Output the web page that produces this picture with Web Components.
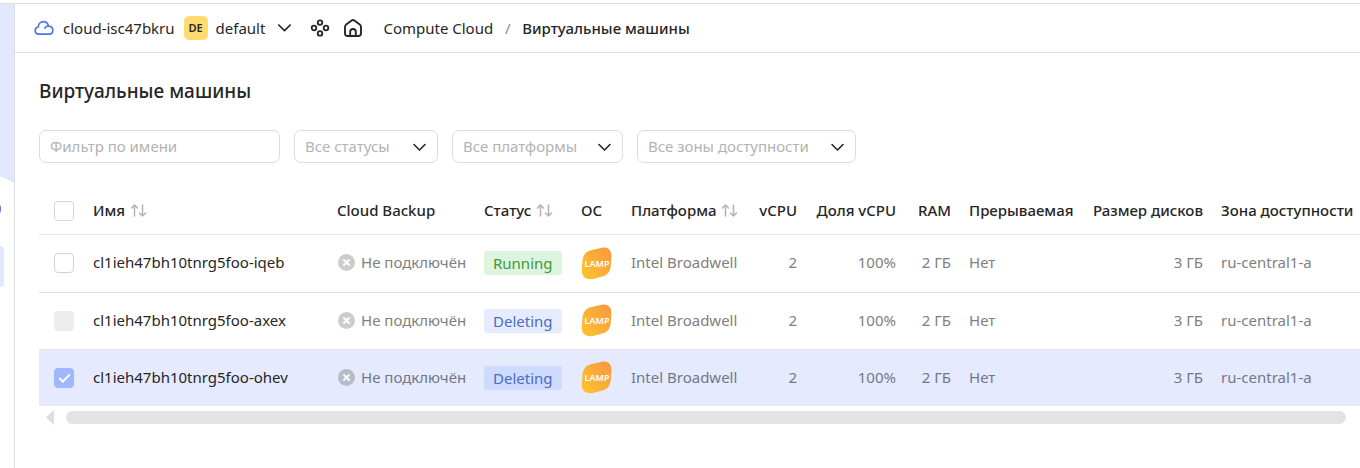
<!DOCTYPE html>
<html lang="ru">
<head>
<meta charset="utf-8">
<meta name="viewport" content="width=device-width, initial-scale=1">
<title>Виртуальные машины</title>
<style>
  body {
    margin: 0;
    background: #fff;
    color: #262626;
    font: 15px/20px "Noto Sans", "Open Sans", sans-serif;
    --line: #e3e3e3;
    --accent: #e5eaff;
    --hint: #b3b3b3;
    --muted: #808080;
  }
</style>
</head>
<body>
<console-app>
  <side-rail slot="rail"></side-rail>
  <top-bar slot="header" cloud="cloud-isc47bkru" folder="default" initials="DE">
    <a href="#compute">Compute Cloud</a>
    <span slot="current">Виртуальные машины</span>
  </top-bar>
  <h1 slot="title">Виртуальные машины</h1>
  <filter-bar slot="filters">
    <text-filter label="Фильтр по имени"></text-filter>
    <select-filter label="Все статусы" style="--width:144px"></select-filter>
    <select-filter label="Все платформы" style="--width:171px"></select-filter>
    <select-filter label="Все зоны доступности" style="--width:219px"></select-filter>
  </filter-bar>
  <vm-table></vm-table>
  <scroll-track></scroll-track>
</console-app>

<script>
  const define = (name, html, setup) => {
    const template = document.createElement('template');
    template.innerHTML = html;
    customElements.define(name, class extends HTMLElement {
      constructor() {
        super();
        this.attachShadow({ mode: 'open' }).append(template.content.cloneNode(true));
      }
      connectedCallback() {
        if (setup) setup(this, this.shadowRoot);
      }
    });
  };

  define('console-app', `
    <style>
      :host { display: block; border-top: 1px solid #dedede; margin-top: 3px; }
      .shell { display: grid; grid-template-columns: 15px minmax(0, 1fr); min-height: calc(100vh - 4px); }
      .content { padding-left: 24px; }
      ::slotted(h1) { margin: 24px 0 25px; font-size: 19px; line-height: 28px; font-weight: 500; }
    </style>
    <div class="shell">
      <slot name="rail"></slot>
      <main>
        <slot name="header"></slot>
        <div class="content">
          <slot name="title"></slot>
          <slot name="filters"></slot>
          <slot></slot>
        </div>
      </main>
    </div>`);

  define('side-rail', `
    <style>
      :host { display: block; box-sizing: border-box; border-right: 1px solid #dcdde3; overflow: hidden; }
      svg { display: block; }
    </style>
    <svg width="14" height="300" viewBox="0 0 14 300" aria-hidden="true">
      <path d="M0 0H14V179Q8 175 0 172.500Z" fill="#e1e8ff"/>
      <circle cx="-9" cy="205" r="10" fill="#4a74dd"/>
      <path d="M0 242a4 4 0 0 1 4 4v33a4 4 0 0 1-4 4Z" fill="#e1e8ff"/>
    </svg>`);

  define('top-bar', `
    <style>
      :host { display: block; }
      header { display: flex; align-items: center; height: 48px; border-bottom: 1px solid var(--line); padding: 0 19px; white-space: nowrap; }
      a, ::slotted(a) { color: inherit; text-decoration: none; }
      svg { display: block; flex: none; }
      .cloud { display: flex; align-items: center; gap: 9px; margin-right: 9px; }
      button { display: flex; align-items: center; border: 0; padding: 0; background: none; color: inherit; font: inherit; }
      .initials { width: 24px; border-radius: 5px; margin-right: 8px; background: #ffdb70; color: #262626; font-size: 11px; line-height: 24px; font-weight: 600; text-align: center; }
      .folder svg { margin-left: 12px; }
      .tools { display: flex; gap: 13px; margin: 0 20px 0 18px; }
      nav { display: flex; }
      .slash { width: 29px; text-align: center; color: #8c8c8c; }
      .current { font-weight: 500; }
    </style>
    <header>
      <a class="cloud" href="#cloud">
        <svg width="20" height="16" viewBox="0 0 20 16" fill="none" stroke="#4a78e0" stroke-width="1.700" stroke-linecap="round" stroke-linejoin="round"><path d="M4.600 14.200h10.700a3.800 3.800 0 0 0 3.500-3.800c0-2.200-1.700-4-4.200-4.200C13.900 3.400 11.700 1.700 9.300 1.700 6.400 1.700 4.200 4 4.200 7 2.200 7.200 1.200 8.900 1.200 10.600c0 2 1.400 3.600 3.400 3.600ZM10.800 8.200c.5-1.300 2-2.100 3.800-2"/></svg>
        <span id="cloud"></span>
      </a>
      <button class="folder" type="button">
        <span class="initials"></span><span id="folder"></span>
        <svg width="15" height="10" viewBox="0 0 15 10" fill="none" stroke="#262626" stroke-width="1.700" stroke-linecap="round" stroke-linejoin="round"><path d="M1.800 2 7.500 7.700 13.200 2"/></svg>
      </button>
      <div class="tools">
        <button type="button" aria-label="Сервисы">
          <svg width="20" height="20" viewBox="0 0 20 20" fill="none" stroke="#262626" stroke-width="1.800"><circle cx="10" cy="4.600" r="2.300"/><circle cx="10" cy="15.400" r="2.300"/><circle cx="4" cy="10" r="2.300"/><circle cx="16" cy="10" r="2.300"/></svg>
        </button>
        <button type="button" aria-label="Главная">
          <svg width="20" height="20" viewBox="0 0 20 20" fill="none" stroke="#262626" stroke-width="1.900" stroke-linejoin="round"><path d="M2 8.900a3 3 0 0 1 1.200-2.400L8.300 2.700a2.800 2.800 0 0 1 3.400 0l5.100 3.800A3 3 0 0 1 18 8.900v6.300a2.800 2.800 0 0 1-2.800 2.800H4.800A2.800 2.800 0 0 1 2 15.200ZM7.200 18v-4.200a2.800 2.800 0 0 1 5.600 0V18"/></svg>
        </button>
      </div>
      <nav aria-label="Навигация"><slot></slot><span class="slash">/</span><span class="current"><slot name="current"></slot></span></nav>
    </header>`,
    (host, root) => {
      root.querySelector('#cloud').textContent = host.getAttribute('cloud');
      root.querySelector('#folder').textContent = host.getAttribute('folder');
      root.querySelector('.initials').textContent = host.getAttribute('initials');
    });

  define('filter-bar', `
    <style>:host { display: flex; flex-wrap: wrap; gap: 14px; }</style>
    <slot></slot>`);

  define('text-filter', `
    <style>
      :host { display: block; width: 241px; }
      input { display: block; box-sizing: border-box; width: 100%; height: 33px; margin: 0; border: 1px solid #dcdcdc; border-radius: 7px; padding: 0 10px 2px; background: #fff; color: inherit; font: inherit; }
      input::placeholder { color: var(--hint); opacity: 1; }
    </style>
    <input type="text">`,
    (host, root) => {
      const input = root.querySelector('input');
      input.placeholder = host.getAttribute('label');
      input.setAttribute('aria-label', input.placeholder);
    });

  define('select-filter', `
    <style>
      :host { display: grid; align-items: center; width: var(--width); }
      select, svg { grid-area: 1 / 1; }
      select { appearance: none; box-sizing: border-box; width: 100%; height: 33px; margin: 0; border: 1px solid #dcdcdc; border-radius: 7px; padding: 0 32px 2px 10px; background: #fff; color: var(--hint); font: inherit; }
      svg { justify-self: end; margin-right: 11px; pointer-events: none; }
    </style>
    <select><option></option></select>
    <svg width="15" height="10" viewBox="0 0 15 10" fill="none" stroke="#262626" stroke-width="1.600" stroke-linecap="round" stroke-linejoin="round"><path d="M2 2.500 7.500 8 13 2.500"/></svg>`,
    (host, root) => {
      root.querySelector('option').textContent = host.getAttribute('label');
      root.querySelector('select').setAttribute('aria-label', host.getAttribute('label'));
    });

  define('status-label', `
    <style>
      :host { display: inline-block; vertical-align: middle; border-radius: 3px; padding: 2px 9px; background: rgba(82, 130, 255, .15); color: #4a6cc3; }
      :host([kind="running"]) { background: #ddf5df; color: #3a9a3a; }
    </style>
    <slot></slot>`);

  define('backup-state', `
    <style>
      :host { display: flex; align-items: center; gap: 6px; }
      svg { flex: none; }
    </style>
    <svg width="18" height="18" viewBox="0 0 18 18" aria-hidden="true"><circle cx="9.500" cy="9.500" r="8.500" fill="#000" fill-opacity=".2"/><path d="m7 7 5 5m0-5-5 5" stroke="#fff" stroke-width="1.900" stroke-linecap="round"/></svg>
    <slot></slot>`);

  define('os-badge', `
    <style>
      :host { display: block; width: 31px; }
      svg { display: block; }
      text { font: 600 9px "Noto Sans", sans-serif; }
    </style>
    <svg width="31" height="33" viewBox="0 0 31 33" role="img" aria-label="LAMP">
      <defs><linearGradient id="g" x1="0" y1="1" x2="1" y2="0"><stop offset="0" stop-color="#ffc52e"/><stop offset="1" stop-color="#f7973f"/></linearGradient></defs>
      <path d="M11 3 20 .9C27-.6 30.800 3.500 30.400 10L29.800 18C29.300 25 26.500 28.300 20.500 29.800L12 31.900C4.800 33.500.3 29.500.7 23L1.400 14.500C2 7.500 5 4.300 11 3Z" fill="url(#g)"/>
      <text x="16" y="20" text-anchor="middle" fill="#fff">LAMP</text>
    </svg>`);

  define('sort-icon', `
    <style>:host { display: inline-block; } svg { display: block; }</style>
    <svg width="17" height="14" viewBox="0 0 17 14" fill="none" stroke="#b3b3b3" stroke-width="1.500" stroke-linecap="round" stroke-linejoin="round" aria-hidden="true"><path d="M4.500 13V2M1.500 5l3-3 3 3M12.500 2v11M9.500 10l3 3 3-3"/></svg>`);

  const machines = [
    { name: 'cl1ieh47bh10tnrg5foo-iqeb', status: 'Running' },
    { name: 'cl1ieh47bh10tnrg5foo-axex', status: 'Deleting', disabled: true },
    { name: 'cl1ieh47bh10tnrg5foo-ohev', status: 'Deleting', checked: true }
  ];

  define('vm-table', `
    <style>
      :host { display: block; margin-top: 25px; overflow: hidden; }
      table { width: 100%; min-width: 1270px; table-layout: fixed; border-collapse: collapse; }
      th, td { box-sizing: border-box; padding: 0 9px 2px; text-align: left; vertical-align: middle; white-space: nowrap; }
      th { height: 46px; font-weight: 500; border-bottom: 1px solid var(--line); }
      td { height: 57px; color: var(--muted); border-bottom: 1px solid var(--line); }
      tr:first-child td { height: 58px; }
      tr:last-child td { border-bottom: 0; }
      th:first-child, td:first-child { padding: 0 0 0 15px; }
      .mark { padding-bottom: 0; }
      td a { color: #262626; text-decoration: none; }
      .num { text-align: right; }
      .selected { background: var(--accent); }
      .selected td { color: #737889; }
      th button { display: flex; align-items: center; gap: 5px; border: 0; padding: 0; background: none; color: inherit; font: inherit; }
      input { display: grid; place-items: center; appearance: none; box-sizing: border-box; width: 20px; height: 20px; margin: 0; border: 1px solid #d4d4d4; border-radius: 4px; background: #fff; }
      input:disabled { border-color: #ececec; background: #ececec; }
      input:checked { border-color: #9fb7ff; background: #9fb7ff; }
      input:checked::before { content: ""; width: 9px; height: 4px; border: solid #fff; border-width: 0 0 2px 2px; transform: translateY(-1px) rotate(-45deg); }
    </style>
    <table>
      <colgroup>
        <col style="width:45px"><col><col style="width:147px"><col style="width:97px"><col style="width:50px"><col style="width:126px">
        <col style="width:58px"><col style="width:99px"><col style="width:55px"><col style="width:123px"><col style="width:129px"><col style="width:148px">
      </colgroup>
      <thead><tr>
        <th><input type="checkbox" aria-label="Выбрать все"></th>
        <th><button type="button">Имя<sort-icon></sort-icon></button></th>
        <th>Cloud Backup</th>
        <th><button type="button">Статус<sort-icon></sort-icon></button></th>
        <th>ОС</th>
        <th><button type="button">Платформа<sort-icon></sort-icon></button></th>
        <th class="num">vCPU</th>
        <th class="num">Доля vCPU</th>
        <th class="num">RAM</th>
        <th>Прерываемая</th>
        <th class="num">Размер дисков</th>
        <th>Зона доступности</th>
      </tr></thead>
      <tbody></tbody>
    </table>`,
    (host, root) => {
      root.querySelector('tbody').innerHTML = machines.map(m => `
        <tr class="${m.checked ? 'selected' : ''}">
          <td><input type="checkbox" aria-label="${m.name}"${m.checked ? ' checked' : ''}${m.disabled ? ' disabled' : ''}></td>
          <td><a href="#${m.name}">${m.name}</a></td>
          <td><backup-state>Не подключён</backup-state></td>
          <td class="mark"><status-label kind="${m.status.toLowerCase()}">${m.status}</status-label></td>
          <td class="mark"><os-badge></os-badge></td>
          <td>Intel Broadwell</td>
          <td class="num">2</td>
          <td class="num">100%</td>
          <td class="num">2 ГБ</td>
          <td>Нет</td>
          <td class="num">3 ГБ</td>
          <td>ru-central1-a</td>
        </tr>`).join('');
    });

  define('scroll-track', `
    <style>
      :host { display: flex; align-items: center; gap: 12px; padding: 4px 14px 0 7px; }
      svg { display: block; flex: none; }
      div { flex: 1; height: 13px; border-radius: 7px; background: var(--line); }
    </style>
    <svg width="8" height="15" viewBox="0 0 8 15" aria-hidden="true"><path d="M8 0v15L0 7.500Z" fill="#dedede"/></svg>
    <div></div>`);
</script>
</body>
</html>
